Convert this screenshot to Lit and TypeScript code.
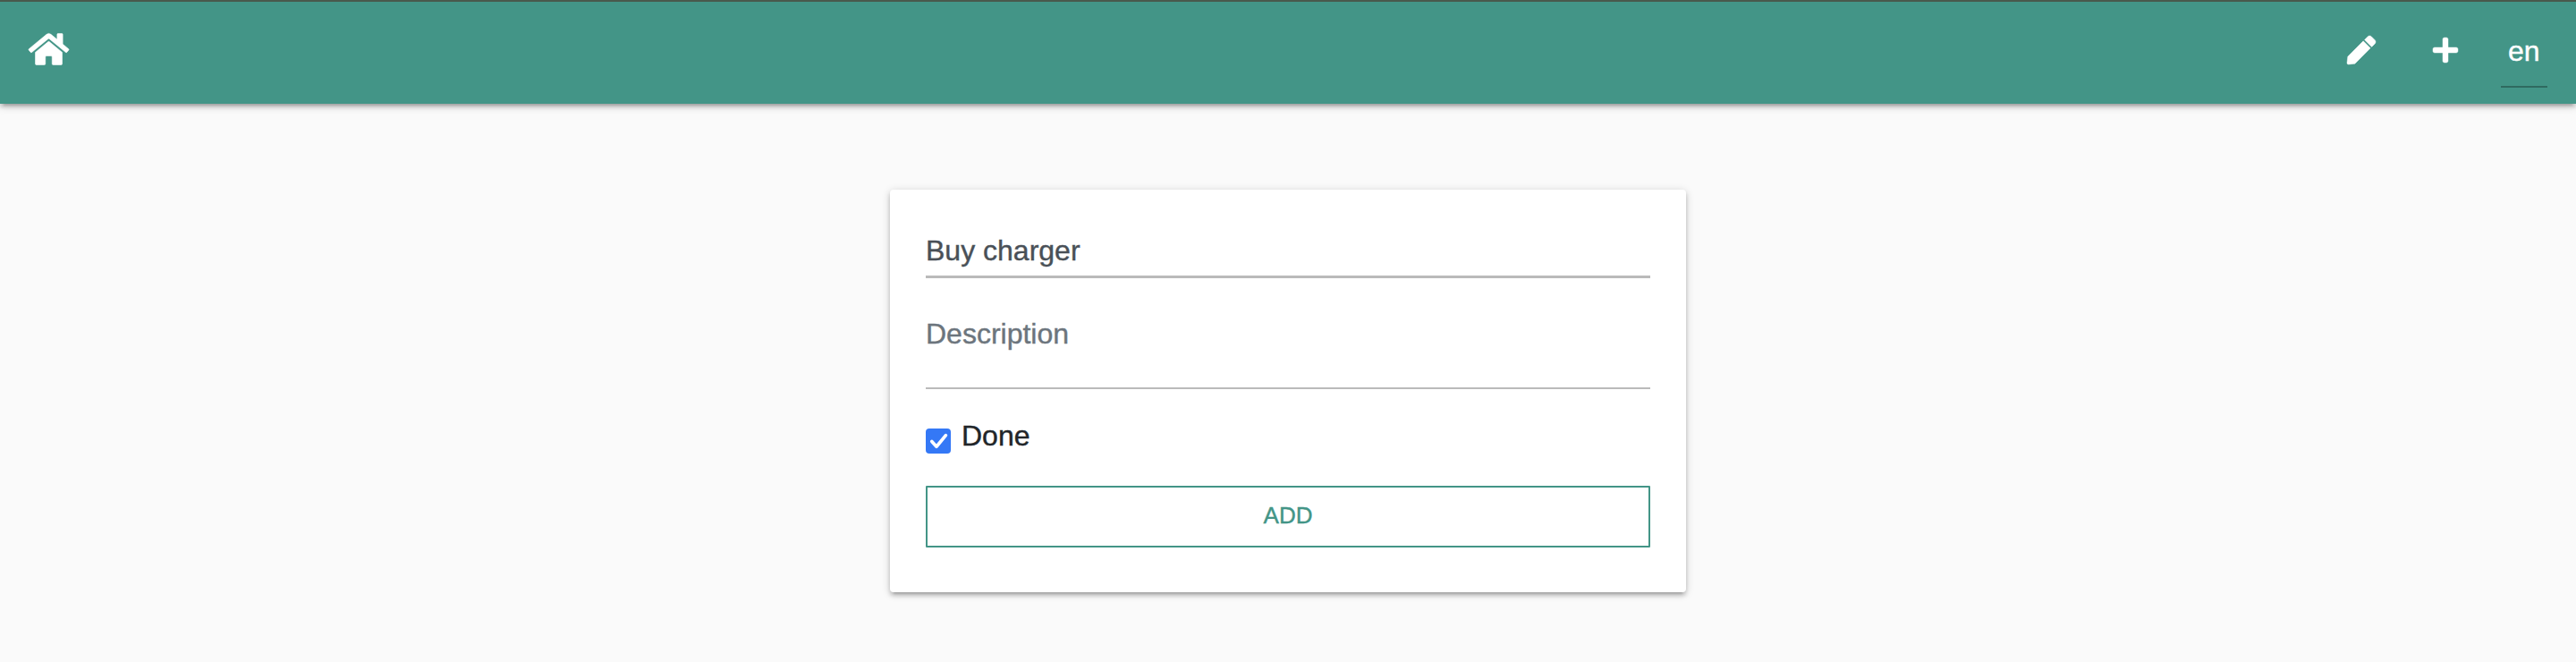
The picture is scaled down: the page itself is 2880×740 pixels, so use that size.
import { LitElement, html, css } from "lit";
import { customElement, property, state } from "lit/decorators.js";

@customElement("nav-bar")
export class NavBar extends LitElement {
  @property() language = "en";

  static styles = css`
    :host { display: block; }
    .bar {
      box-sizing: border-box;
      height: 116px;
      padding: 0 32px;
      border-top: 2px solid #49594c;
      background: #439587;
      color: #fff;
      display: flex;
      align-items: flex-start;
      justify-content: space-between;
      box-shadow: 0 4px 4px 0 rgba(0, 0, 0, 0.14), 0 6px 2px -4px rgba(0, 0, 0, 0.12), 0 2px 10px 0 rgba(0, 0, 0, 0.2);
    }
    svg { display: block; fill: currentColor; stroke: currentColor; stroke-width: 7; overflow: visible; }
    .home { margin-top: 33px; width: 45px; height: 40px; }
    .actions { display: flex; align-items: flex-start; }
    .pen { margin-top: 38px; width: 32px; height: 32px; }
    .plus { margin: 38px 48px 0 64px; width: 28px; height: 32px; }
    .language {
      box-sizing: border-box;
      width: 52px;
      height: 96px;
      padding: 34px 0 0 8px;
      border-bottom: 2px solid #2f6a60;
      font: 32px/42px "Liberation Sans", Arial, sans-serif;
      -webkit-text-stroke: 0.4px currentColor;
    }
  `;

  render() {
    return html`
      <nav class="bar">
        <svg class="home" viewBox="0 0 576 512"><path d="M280.37 148.26L96 300.11V464a16 16 0 0 0 16 16l112.06-.29a16 16 0 0 0 15.92-16V368a16 16 0 0 1 16-16h64a16 16 0 0 1 16 16v95.64a16 16 0 0 0 16 16.05L464 480a16 16 0 0 0 16-16V300L295.67 148.26a12.19 12.19 0 0 0-15.3 0zM571.6 251.47L488 182.56V44.05a12 12 0 0 0-12-12h-56a12 12 0 0 0-12 12v72.61L318.47 43a48 48 0 0 0-61 0L4.34 251.47a12 12 0 0 0-1.6 16.9l25.5 31A12 12 0 0 0 45.15 301l235.22-193.74a12.19 12.19 0 0 1 15.3 0L530.9 301a12 12 0 0 0 16.9-1.6l25.5-31a12 12 0 0 0-1.7-16.93z"/></svg>
        <div class="actions">
          <svg class="pen" viewBox="0 0 512 512"><path d="M290.74 93.24l128.02 128.02-277.99 277.99-114.14 12.6C11.35 513.54-1.56 500.62.14 485.34l12.7-114.22 277.9-277.88zm207.2-19.06l-60.11-60.11c-18.75-18.75-49.16-18.75-67.91 0l-56.55 56.55 128.02 128.02 56.55-56.55c18.75-18.76 18.75-49.16 0-67.91z"/></svg>
          <svg class="plus" viewBox="0 0 448 512"><path d="M416 208H272V64c0-17.67-14.33-32-32-32h-32c-17.67 0-32 14.33-32 32v144H32c-17.67 0-32 14.33-32 32v32c0 17.67 14.33 32 32 32h144v144c0 17.67 14.33 32 32 32h32c17.67 0 32-14.33 32-32V304h144c17.67 0 32-14.33 32-32v-32c0-17.67-14.33-32-32-32z"/></svg>
          <div class="language">${this.language}</div>
        </div>
      </nav>
    `;
  }
}

@customElement("task-form")
export class TaskForm extends LitElement {
  @state() private done = true;

  static styles = css`
    :host { display: block; }
    .card {
      box-sizing: border-box;
      width: 890px;
      height: 450px;
      padding: 40px;
      display: flex;
      flex-direction: column;
      border-radius: 4px;
      background: #fff;
      font: 32px/48px "Liberation Sans", Arial, sans-serif;
      -webkit-text-stroke: 0.4px currentColor;
      color: #212529;
      box-shadow: 0 4px 4px 0 rgba(0, 0, 0, 0.14), 0 6px 2px -4px rgba(0, 0, 0, 0.12), 0 2px 10px 0 rgba(0, 0, 0, 0.2);
    }
    .field {
      box-sizing: border-box;
      width: 100%;
      margin: 0;
      border: 0;
      border-radius: 0;
      outline: 0;
      background: transparent;
      font: inherit;
      color: #495057;
      resize: none;
      overflow: hidden;
      display: block;
    }
    .field::placeholder { color: #6c757d; opacity: 1; }
    .title { height: 59px; padding: 4px 0; border-bottom: 3px solid #bababa; }
    .description { height: 124px; padding: 38px 0 0; border-bottom: 2px solid #bababa; }
    .done {
      display: flex;
      gap: 12px;
      height: 91px;
      margin-top: 17px;
    }
    .check {
      margin-top: 27px;
      width: 28px;
      height: 28px;
      border-radius: 4px;
      background: #3478f6;
    }
    .check svg { display: block; }
    .label { margin-top: 11px; }
    .add {
      box-sizing: border-box;
      height: 69px;
      padding: 0 0 3px;
      border: 2px solid #439587;
      border-radius: 1px;
      background: transparent;
      color: #439587;
      font: 26px/39px "Liberation Sans", Arial, sans-serif;
      -webkit-text-stroke: 0.4px currentColor;
      text-transform: uppercase;
    }
  `;

  render() {
    return html`
      <form class="card">
        <input class="field title" value="Buy charger" />
        <textarea class="field description" placeholder="Description"></textarea>
        <div class="done" @click=${() => (this.done = !this.done)}>
          <span class="check">
            ${this.done
              ? html`<svg width="28" height="28" viewBox="0 0 28 28"><path d="M6.8 14.4L12 20.2L22.4 7.6" fill="none" stroke="#fff" stroke-width="3.7" stroke-linecap="round" stroke-linejoin="round"/></svg>`
              : ""}
          </span>
          <span class="label">Done</span>
        </div>
        <button class="add" type="button">Add</button>
      </form>
    `;
  }
}

@customElement("app-root")
export class AppRoot extends LitElement {
  static styles = css`
    :host { display: block; min-height: 740px; background: #fafafa; }
    .content { display: flex; justify-content: center; padding: 96px 0 78px; }
  `;

  render() {
    return html`
      <nav-bar></nav-bar>
      <main class="content"><task-form></task-form></main>
    `;
  }
}
